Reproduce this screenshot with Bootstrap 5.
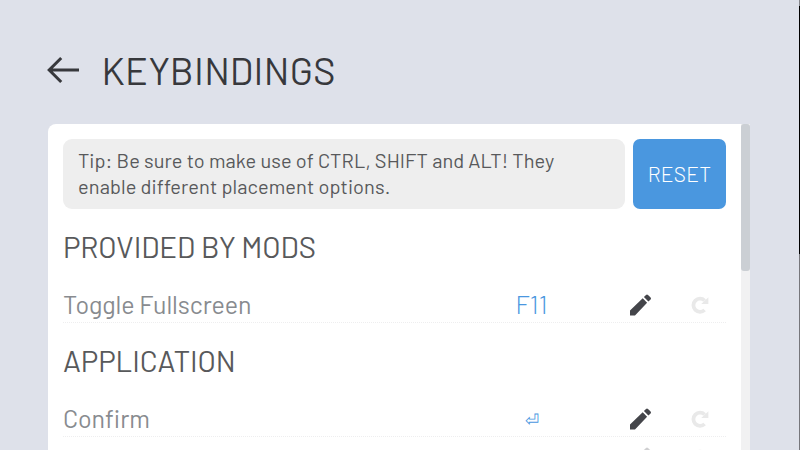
<!DOCTYPE html>
<html lang="en">
<head>
<meta charset="utf-8">
<meta name="viewport" content="width=device-width, initial-scale=1">
<title>Keybindings</title>
<link href="https://cdn.jsdelivr.net/npm/bootstrap@5.3.0/dist/css/bootstrap.min.css" rel="stylesheet">
<style>
html, body { height: 450px; overflow: hidden; }
body { background: #dee1ea; font-family: Barlow, Roboto, "Liberation Sans", sans-serif; color: #58595b; }
.page { width: 800px; height: 450px; padding: 48px 49px 0 47px; }
.edge { width: 1px; height: 450px; background: linear-gradient(#85868b 6px, #000 6px 254px, #77777c 254px); top: 0; right: 0; }
.top-bar { height: 44px; margin-bottom: 32px; }
.top-bar h1 { font-size: 38px; line-height: 44px; font-weight: 400; color: #37383c; margin-left: 21.5px; letter-spacing: .35px; }
.panel { width: 702px; height: 326px; border-radius: 8px 0 0 0; background: #fff; margin-left: 1px; }
.panel-body { width: 693px; padding: 15px 15px 0; }
.track { width: 9px; background: #f1f1f2; }
.thumb { height: 147px; background: #cbcfd4; border-radius: 3px; }
.tip { width: 562px; height: 70px; border-radius: 9px; background: #eee; padding: 8px 15px; font-size: 20px; line-height: 26px; letter-spacing: .1px; white-space: nowrap; }
.btn-reset { width: 93px; height: 70px; border-radius: 7px; background: #4a97df; color: #fff; font-size: 21px; font-weight: 300; padding: 0; letter-spacing: .2px; }
.section-title { height: 75px; padding-top: 14px; font-size: 29.5px; line-height: 36px; font-weight: 400; letter-spacing: -.1px; }
.tip-row + .section-title { height: 80px; padding-top: 19px; }
.binding { height: 34px; margin-bottom: 5px; border-bottom: 1px dotted #eeeeef; }
.binding-name { width: 414px; font-size: 25px; line-height: 32px; font-weight: 400; color: #888b8f; margin-top: -3px; letter-spacing: -.08px; }
.binding-key { width: 109px; font-size: 25px; line-height: 32px; font-weight: 300; color: #4a97df; margin-top: -3px; }
.key-symbol { font-size: 17px; margin-top: -1px; }
.icon-cell { width: 59px; height: 33px; margin-left: 25px; padding-bottom: 1px; }
.redo-cell { padding: 0 17px 1px 0; }
svg { display: block; }
</style>
<script src="https://cdn.jsdelivr.net/npm/bootstrap@5.3.0/dist/js/bootstrap.bundle.min.js"></script>
</head>
<body>
<svg class="d-none">
  <symbol id="pencil" viewBox="0 0 22 22"><path d="M0 16.5 12.7 4.2 17.1 8.7 5 21.5H0ZM13.9 3 16 .9Q17 0 18 .9L20.6 3.5Q21.5 4.5 20.6 5.5L18.4 7.6Z" fill="#44454a"/></symbol>
  <symbol id="redo" viewBox="0 0 18 18"><path d="M13.6 4.5A6.6 6.6 0 1 0 13.6 14" fill="none" stroke="#e9e9e9" stroke-width="3.8"/><path d="M17.4 1.2V8H10.2Z" fill="#e9e9e9"/></symbol>
</svg>
<main class="page">
  <header class="top-bar d-flex align-items-center">
    <svg width="33" height="44" viewBox="0 0 33 44" fill="none" stroke="#37383c" stroke-width="3"><path d="M32 22H2.2M14.2 10 2.2 22 14.2 34"/></svg>
    <h1 class="mb-0">KEYBINDINGS</h1>
  </header>
  <section class="panel d-flex overflow-hidden">
    <div class="panel-body">
      <div class="tip-row d-flex gap-2">
        <div class="tip">Tip: Be sure to make use of CTRL, SHIFT and ALT! They<br>enable different placement options.</div>
        <button class="btn btn-reset" type="button">RESET</button>
      </div>
      <div class="section-title">PROVIDED BY MODS</div>
      <div class="binding d-flex align-items-center">
        <div class="binding-name">Toggle Fullscreen</div>
        <div class="binding-key text-center">F11</div>
        <div class="icon-cell d-flex align-items-center justify-content-center"><svg width="22" height="22"><use href="#pencil"/></svg></div>
        <div class="redo-cell ms-auto"><svg width="18" height="18"><use href="#redo"/></svg></div>
      </div>
      <div class="section-title">APPLICATION</div>
      <div class="binding d-flex align-items-center">
        <div class="binding-name">Confirm</div>
        <div class="binding-key key-symbol text-center">⏎</div>
        <div class="icon-cell d-flex align-items-center justify-content-center"><svg width="22" height="22"><use href="#pencil"/></svg></div>
        <div class="redo-cell ms-auto"><svg width="18" height="18"><use href="#redo"/></svg></div>
      </div>
      <div class="binding d-flex align-items-center">
        <div class="binding-name"></div>
        <div class="binding-key"></div>
        <div class="icon-cell d-flex align-items-center justify-content-center opacity-25"><svg width="22" height="22"><use href="#pencil"/></svg></div>
        <div class="redo-cell ms-auto"><svg width="18" height="18"><use href="#redo"/></svg></div>
      </div>
    </div>
    <div class="track"><div class="thumb"></div></div>
  </section>
</main>
<div class="edge position-absolute"></div>
</body>
</html>
